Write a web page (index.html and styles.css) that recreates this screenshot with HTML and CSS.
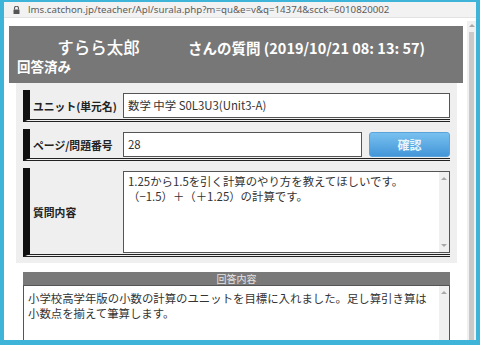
FILE: index.html
```html
<!DOCTYPE html>
<html lang="ja">
<head>
    <meta charset="UTF-8">
    <meta name="viewport" content="width=device-width, initial-scale=1.0">
    <title>質問詳細</title>
    <link rel="stylesheet" href="styles.css">
</head>
<body>
    <div class="window">
        <div class="addressbar">
            <svg class="lock" width="7" height="8" viewBox="0 0 7 8">
                <path d="M1.5 3.5V2.3a2 2 0 0 1 4 0v1.2" fill="none" stroke="#555" stroke-width="1.1"/>
                <rect x="0.5" y="3.5" width="6" height="4.5" rx="0.6" fill="#555"/>
            </svg>
            <span class="url">lms.catchon.jp/teacher/Apl/surala.php?m=qu&amp;e=v&amp;q=14374&amp;scck=6010820002</span>
        </div>

        <div class="viewport">
            <div class="page">
                <div class="qhead">
                    <div class="qtitle">
                        <span class="student">すらら太郎</span>
                        <span class="subject">さんの質問 (2019/10/21 08: 13: 57)</span>
                    </div>
                    <div class="status">回答済み</div>
                </div>

                <div class="panel">
                    <div class="field">
                        <div class="field-label">ユニット(単元名)</div>
                        <div class="field-body">
                            <div class="input">数学 中学 S0L3U3(Unit3-A)</div>
                        </div>
                    </div>
                    <div class="field">
                        <div class="field-label">ページ/問題番号</div>
                        <div class="field-body">
                            <div class="input">28</div>
                            <button class="btn" type="button">確認</button>
                        </div>
                    </div>
                    <div class="field">
                        <div class="field-label">質問内容</div>
                        <div class="field-body">
                            <div class="textbox question">
                                <div class="textbox-text">1.25から1.5を引く計算のやり方を教えてほしいです。<br>（−1.5）＋（＋1.25）の計算です。</div>
                                <div class="minibar"><span class="up"></span><span class="down"></span></div>
                            </div>
                        </div>
                    </div>
                </div>

                <div class="answer">
                    <div class="answer-head">回答内容</div>
                    <div class="textbox answer-box">
                        <div class="textbox-text">小学校高学年版の小数の計算のユニットを目標に入れました。足し算引き算は<br>小数点を揃えて筆算します。</div>
                        <div class="minibar"><span class="up"></span></div>
                    </div>
                </div>
            </div>

            <div class="scrollbar">
                <span class="up"></span>
                <div class="thumb"></div>
            </div>
        </div>
    </div>
</body>
</html>
```

FILE: styles.css
```css
html, body {
    margin: 0;
    padding: 0;
    background: #fff;
}
body {
    font-family: "Noto Sans CJK JP", "Noto Sans", sans-serif;
    color: #333;
}
.window {
    width: 480px;
    height: 345px;
    box-sizing: border-box;
    border-style: solid;
    border-color: #3db4d8;
    border-width: 2px 4px 5px 4px;
    display: flex;
    flex-direction: column;
    overflow: hidden;
    background: #fff;
}

/* address bar */
.addressbar {
    height: 15px;
    flex: none;
    background: #f2f2f2;
    border-bottom: 1px solid #e2e2e2;
    display: flex;
    align-items: center;
    padding-left: 9px;
}
.lock {
    margin-right: 8px;
}
.url {
    font-family: "Noto Sans", sans-serif;
    font-size: 9.7px;
    color: #5c5c5c;
    white-space: nowrap;
}

.viewport {
    flex: 1;
    display: flex;
    min-height: 0;
}
.page {
    flex: 1;
    padding: 8px 4px 0 5px;
    overflow: hidden;
}

/* question header */
.qhead {
    height: 57px;
    background: #777;
    color: #fff;
    box-sizing: border-box;
    padding-top: 11px;
}
.qtitle {
    display: flex;
    align-items: baseline;
    white-space: nowrap;
    line-height: 20px;
}
.student {
    width: 179px;
    text-align: center;
    font-size: 16.5px;
    font-weight: 500;
}
.subject {
    font-size: 14.5px;
    font-weight: bold;
}
.status {
    font-size: 13.5px;
    font-weight: bold;
    line-height: 16px;
    padding-left: 8px;
}

/* form panel */
.panel {
    background: #efefef;
    margin: 0 6px 0 7px;
    padding: 7px 7px 6px;
    display: flex;
    flex-direction: column;
    gap: 7px;
}
.field {
    display: flex;
    align-items: center;
    border-left: 7px solid #111;
    border-bottom: 3px double #222;
    padding: 3px 0 1px;
}
.field-label {
    width: 93px;
    flex: none;
    box-sizing: border-box;
    padding-left: 3px;
    font-size: 10.8px;
    font-weight: bold;
    color: #222;
    white-space: nowrap;
}
.field-body {
    flex: 1;
    display: flex;
    gap: 7px;
}
.input {
    flex: 1;
    height: 25px;
    box-sizing: border-box;
    border: 1px solid #555;
    background: #fff;
    padding-left: 4px;
    font-size: 11.4px;
    line-height: 23px;
    color: #333;
    white-space: nowrap;
}
.btn {
    width: 81px;
    height: 25px;
    border: 1px solid #5aa4dc;
    border-radius: 3px;
    background: linear-gradient(#78c1ef, #4496d8);
    color: #eaf4fb;
    font-family: "Noto Sans CJK JP", sans-serif;
    font-size: 12px;
    font-weight: bold;
    padding: 0;
}

/* text areas */
.textbox {
    flex: 1;
    display: flex;
    border: 1px solid #555;
    background: #fff;
    box-sizing: border-box;
}
.question {
    height: 82px;
}
.textbox-text {
    flex: 1;
    padding: 2px 4px;
    font-size: 11.4px;
    line-height: 15px;
    color: #333;
    white-space: nowrap;
}
.minibar {
    width: 10px;
    background: #f0f0f0;
    display: flex;
    flex-direction: column;
    justify-content: space-between;
    align-items: center;
    padding: 5px 0;
}
.up, .down {
    width: 0;
    height: 0;
    border-left: 3px solid transparent;
    border-right: 3px solid transparent;
}
.up {
    border-bottom: 3px solid #a8a8a8;
}
.down {
    border-top: 3px solid #a8a8a8;
}

/* answer */
.answer {
    margin: 9px 13px 0 14px;
}
.answer-head {
    height: 13px;
    background: #797979;
    color: #e4e4e4;
    font-size: 10px;
    line-height: 13px;
    text-align: center;
}
.answer-box {
    height: 70px;
}
.answer-box .textbox-text {
    padding-top: 5px;
}

/* page scrollbar */
.scrollbar {
    width: 9px;
    flex: none;
    background: #f0f0f0;
    margin-top: 3px;
    display: flex;
    flex-direction: column;
    align-items: center;
    padding-top: 3px;
    gap: 5px;
}
.thumb {
    width: 5px;
    flex: 1;
    background: #c9c9c9;
}
```
